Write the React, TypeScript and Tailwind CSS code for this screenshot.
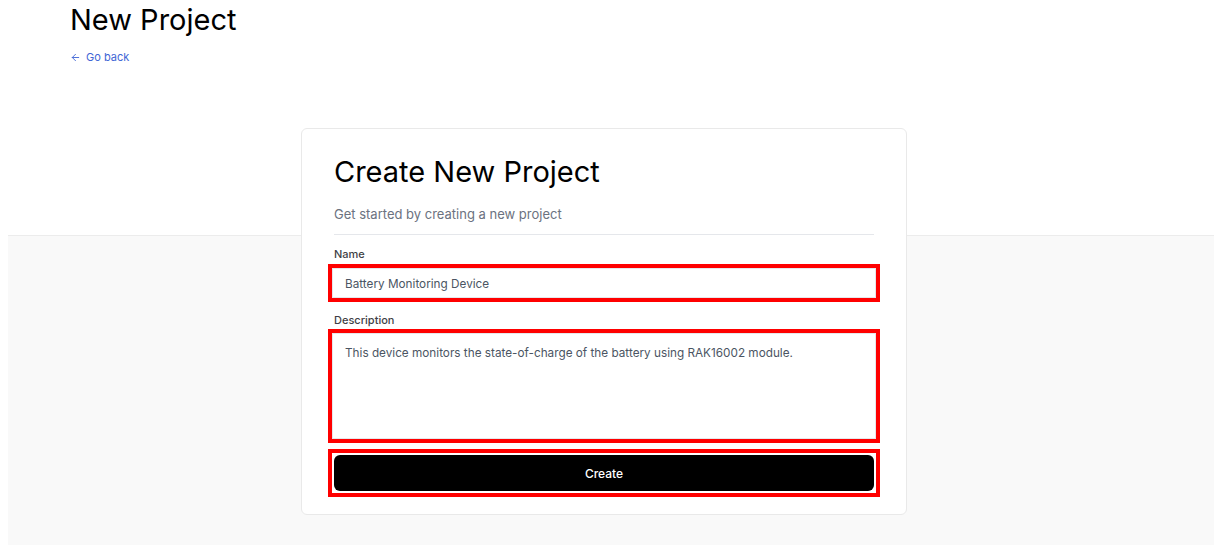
import { ArrowLeft } from "lucide-react";

export default function App() {
  return (
    <div className="min-h-[555px] w-full bg-white font-['Inter',sans-serif] text-black">
      {/* Header */}
      <div className="h-[235px] pl-[70px] pt-[3px]">
        <h1 className="text-[29px] leading-[34px] font-normal text-black">New Project</h1>
        <a href="#" className="mt-[12px] flex items-center gap-[5px] text-[11px] leading-4 text-[#4166d5]">
          <ArrowLeft className="h-[11px] w-[11px]" strokeWidth={2} />
          Go back
        </a>
      </div>

      {/* Body */}
      <div className="mx-2 h-[310px] border-t border-[#ececec] bg-[#f9f9f9]">
        <div className="-mt-[108px] ml-[293px] w-[606px] rounded-md border border-[#e9e9e9] bg-white px-[32px] pt-[25px] pb-[17px]">
          <h2 className="text-[29px] leading-9 font-normal text-black">Create New Project</h2>
          <p className="mt-[14px] text-[13px] leading-5 text-[#6b7280]">Get started by creating a new project</p>
          <div className="mt-2.5 border-t border-[#e5e7eb]" />

          <label className="mt-[11px] block text-[11px] leading-4 font-medium text-[#3f3f46]">Name</label>
          <div className="-mx-[6px] mt-[2px] border-4 border-[#ff0000]">
            <input
              readOnly
              value="Battery Monitoring Device"
              className="block h-[30px] w-full border border-[#e5e7eb] px-3 pt-[1px] text-[11.75px] text-[#4b5563] outline-none"
            />
          </div>

          <label className="mt-[10px] block text-[11px] leading-4 font-medium text-[#3f3f46]">Description</label>
          <div className="-mx-[6px] mt-[1px] border-4 border-[#ff0000]">
            <textarea
              readOnly
              value="This device monitors the state-of-charge of the battery using RAK16002 module."
              className="block h-[106px] w-full resize-none border border-[#e5e7eb] px-3 pt-[9px] pb-2 text-[11.75px] leading-5 text-[#4b5563] outline-none"
            />
          </div>

          <div className="-mx-[6px] mt-[6px] border-4 border-[#ff0000] p-[2px]">
            <button className="flex h-9 w-full items-center justify-center rounded-md bg-black pt-[1px] text-xs font-medium text-white">
              Create
            </button>
          </div>
        </div>
      </div>
    </div>
  );
}
